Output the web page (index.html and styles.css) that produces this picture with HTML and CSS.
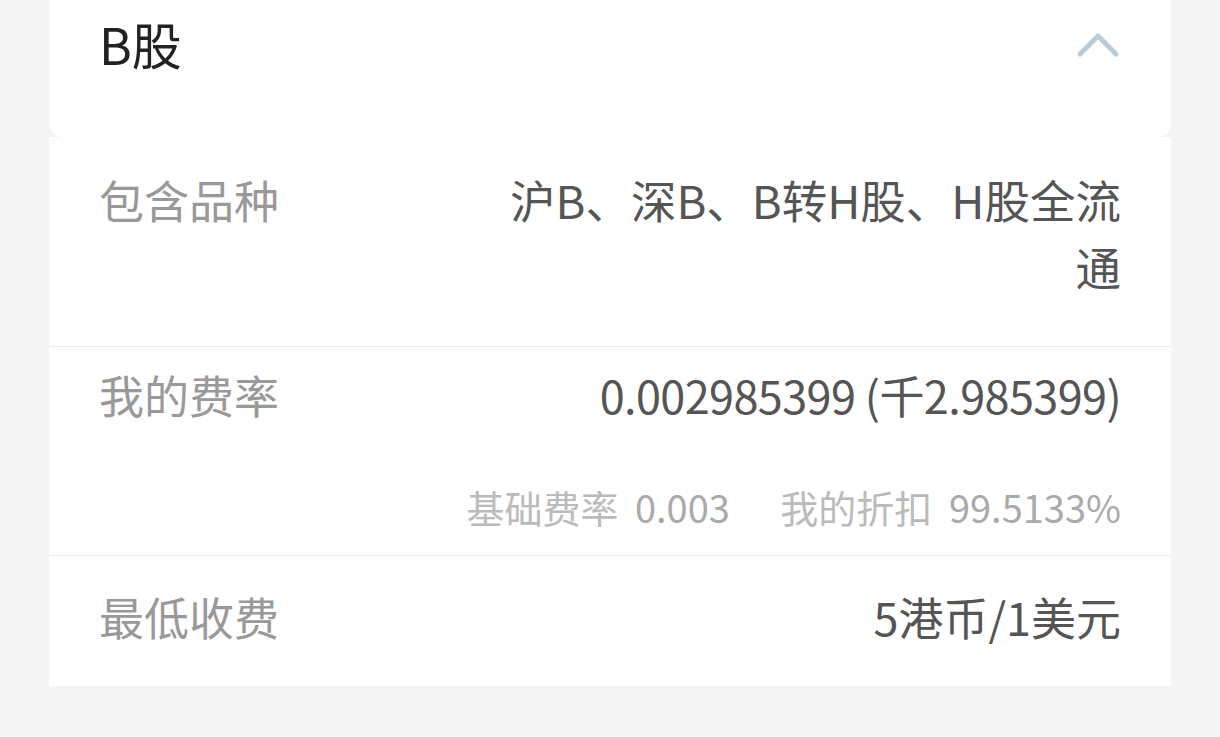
FILE: index.html
```html
<!DOCTYPE html>
<html>
<head>
    <title>B股费率</title>
    <link rel="stylesheet" href="styles.css">
</head>
<body>
    <div class="card">
        <div class="card-head">
            <span class="title">B股</span>
            <svg class="chevron" width="44" height="28" viewBox="0 0 44 28">
                <path d="M4 22 L22 4 L40 22" />
            </svg>
        </div>
        <div class="card-body">
            <div class="row row-kinds">
                <div class="label">包含品种</div>
                <div class="value">沪B、深B、B转H股、H股全流<br>通</div>
            </div>
            <div class="row row-rate">
                <div class="rate-main">
                    <div class="label">我的费率</div>
                    <div class="value num">0.002985399 (千2.985399)</div>
                </div>
                <div class="rate-sub">
                    <span class="sub-label">基础费率</span>
                    <span class="sub-num">0.003</span>
                    <span class="sub-label sub-gap">我的折扣</span>
                    <span class="sub-num">99.5133%</span>
                </div>
            </div>
            <div class="row row-min">
                <div class="label">最低收费</div>
                <div class="value">5港币/1美元</div>
            </div>
        </div>
    </div>
</body>
</html>
```

FILE: styles.css
```css
body {
    margin: 0;
    background-color: #f4f4f4;
    font-family: "Noto Sans CJK SC", "Noto Sans", sans-serif;
}

.card {
    margin: 0 49px;
}

.card-head {
    background-color: #fff;
    border-radius: 14px;
    margin-top: -30px;
    height: 167px;
    box-sizing: border-box;
    padding: 39px 50px 0 50px;
    display: flex;
    justify-content: space-between;
    align-items: flex-start;
}

.title {
    font-size: 50px;
    line-height: 68px;
    color: #222;
}

.chevron {
    margin-top: 23px;
    margin-right: 1px;
}

.chevron path {
    fill: none;
    stroke: #bccbd9;
    stroke-width: 5;
    stroke-linecap: round;
    stroke-linejoin: round;
}

.card-body {
    background-color: #fff;
}

.row {
    padding: 0 50px;
    border-top: 1px solid #ececec;
    font-size: 45px;
    line-height: 67px;
}

.row:first-child {
    border-top: none;
}

.row-kinds,
.row-min {
    display: flex;
    justify-content: space-between;
}

.row-kinds {
    padding-top: 29px;
    height: 209px;
    box-sizing: border-box;
}

.row-kinds .value {
    font-size: 45.5px;
}

.row-min {
    padding-top: 27px;
    height: 131px;
    box-sizing: border-box;
}

.row-rate {
    padding-top: 14px;
    height: 209px;
    box-sizing: border-box;
}

.rate-main {
    display: flex;
    justify-content: space-between;
}

.label {
    color: #999;
    white-space: nowrap;
}

.value {
    color: #555;
    text-align: right;
}

.num {
    letter-spacing: -0.6px;
}

.rate-sub {
    margin-top: 51px;
    text-align: right;
    font-size: 38px;
    line-height: 56px;
}

.sub-label {
    color: #bbb;
}

.sub-num {
    color: #aaa;
    margin-left: 8px;
}

.sub-gap {
    margin-left: 42px;
}
```
